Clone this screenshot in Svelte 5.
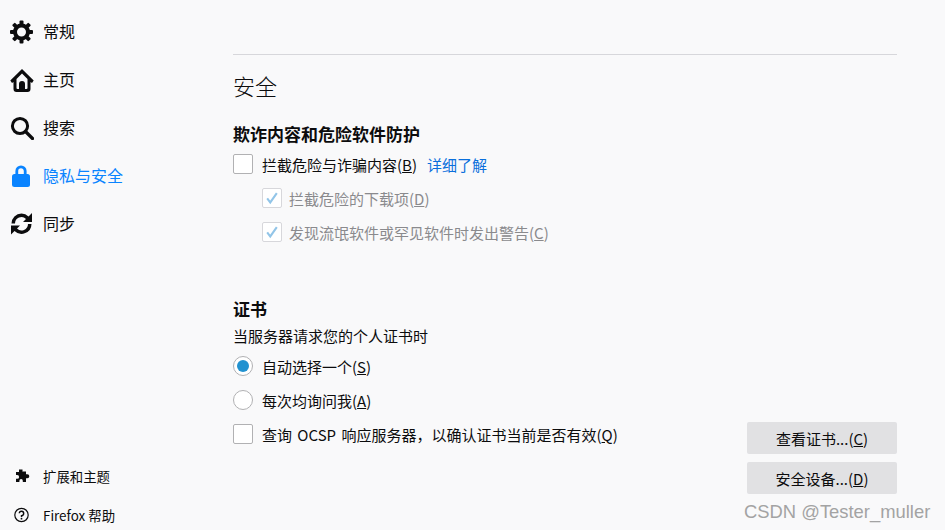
<script>
  const navItems = [
    { id: 'general', label: '常规' },
    { id: 'home', label: '主页' },
    { id: 'search', label: '搜索' },
    { id: 'privacy', label: '隐私与安全', active: true },
    { id: 'sync', label: '同步' }
  ];
  const teeth = [0, 45, 90, 135, 180, 225, 270, 315];
</script>

{#snippet navIcon(id)}
  <svg class="nav-icon" viewBox="0 0 24 24" fill="currentColor">
    {#if id === 'general'}
      <g transform="translate(-.5 0)">
        <circle cx="12" cy="12" r="6.500" fill="none" stroke="currentColor" stroke-width="4" />
        {#each teeth as deg}
          <rect x="10" y="0.500" width="4" height="6" rx="1" transform="rotate({deg} 12 12)" />
        {/each}
      </g>
    {:else if id === 'home'}
      <path fill-rule="evenodd" d="M12 1 .3 12.500 2 15l1.500-1v7a3 3 0 0 0 3 3h11a3 3 0 0 0 3-3v-7L22 15l1.700-2.500L12 1zM12 5.500l5.500 5.500v9a1 1 0 0 1-1 1h-9a1 1 0 0 1-1-1v-9L12 5.500z" />
      <path d="M9 22v-6a3 3 0 0 1 6 0v6H9z" />
    {:else if id === 'search'}
      <circle cx="10" cy="10" r="7.600" fill="none" stroke="currentColor" stroke-width="3" />
      <path d="M15.500 15.500 22.500 22.500" stroke="currentColor" stroke-width="3.200" stroke-linecap="round" />
    {:else if id === 'privacy'}
      <rect x="2" y="10" width="18" height="13" rx="2.500" />
      <path d="M6.800 11V7a4.200 4.200 0 0 1 8.400 0v4" fill="none" stroke="currentColor" stroke-width="2.800" />
    {:else}
      <path d="M11.500 1.500A10 10 0 0 0 1.500 11.500H5a6.500 6.500 0 0 1 11-4.600L13 10h9V1l-3.500 3.500a10 10 0 0 0-7-3z" />
      <path d="M18 12a6.500 6.500 0 0 1-11 4.600L10 13.500H1v9L4.500 19a10 10 0 0 0 17-7H18z" />
    {/if}
  </svg>
{/snippet}

{#snippet check()}
  <svg class="tick" viewBox="0 0 16 16" fill="none" stroke="#92c5e8" stroke-width="2.400">
    <path d="M2.500 8.500 6 13 13.500 2.500" />
  </svg>
{/snippet}

<div class="page">
  <nav class="sidebar">
    <ul class="nav-list">
      {#each navItems as item (item.id)}
        <li class="nav-item" class:active={item.active}>
          {@render navIcon(item.id)}
          <span>{item.label}</span>
        </li>
      {/each}
    </ul>
    <ul class="foot-list">
      <li class="foot-item">
        <svg class="foot-icon" viewBox="0 0 16 16" fill="currentColor">
          <path d="M5 1.500h3.500v2.200a1.500 1.500 0 0 1 .5-.2h1a1.800 1.800 0 0 1 0 0H12v2.800h1.300a2 2 0 0 1 0 4H12V14H8.800v-1.200a1.700 1.700 0 0 0-3.400 0V14H2v-3.200h1.200a1.900 1.900 0 0 0 0-3.800H2V4h3V1.500z" />
        </svg>
        <span>扩展和主题</span>
      </li>
      <li class="foot-item">
        <svg class="foot-icon" viewBox="0 0 16 16">
          <circle cx="7.500" cy="8" r="6.700" fill="none" stroke="currentColor" stroke-width="1.200" />
          <path d="M5.300 6.300A2.200 2.200 0 1 1 7.500 8.700v1.200" fill="none" stroke="currentColor" stroke-width="1.400" />
          <circle cx="7.500" cy="11.700" r="0.900" fill="currentColor" />
        </svg>
        <span>Firefox 帮助</span>
      </li>
    </ul>
  </nav>

  <main class="content">
    <hr class="rule" />
    <h1 class="title">安全</h1>

    <h2 class="heading">欺诈内容和危险软件防护</h2>
    <div class="row first">
      <span class="box"></span>
      <span class="label">拦截危险与诈骗内容(<u>B</u>)</span>
      <span class="link">详细了解</span>
    </div>
    <div class="row sub">
      <span class="box small">{@render check()}</span>
      <span class="label">拦截危险的下载项(<u>D</u>)</span>
    </div>
    <div class="row sub">
      <span class="box small">{@render check()}</span>
      <span class="label">发现流氓软件或罕见软件时发出警告(<u>C</u>)</span>
    </div>

    <h2 class="heading cert">证书</h2>
    <p class="desc">当服务器请求您的个人证书时</p>
    <div class="row">
      <span class="radio selected"></span>
      <span class="label">自动选择一个(<u>S</u>)</span>
    </div>
    <div class="row">
      <span class="radio"></span>
      <span class="label">每次均询问我(<u>A</u>)</span>
    </div>
    <div class="last">
      <div class="row ocsp">
        <span class="box"></span>
        <span class="label">查询 OCSP 响应服务器，以确认证书当前是否有效(<u>Q</u>)</span>
      </div>
      <div class="buttons">
        <button class="btn">查看证书...(<u>C</u>)</button>
        <button class="btn">安全设备...(<u>D</u>)</button>
      </div>
    </div>
  </main>

  <div class="watermark">CSDN @Tester_muller</div>
</div>

<style>
  :global(body) {
    margin: 0;
    background: #f9f9fa;
  }

  .page {
    position: relative;
    display: flex;
    height: 530px;
    overflow: hidden;
    background: #f9f9fa;
    color: #0c0c0d;
    font-family: "Noto Sans CJK SC", "Noto Sans", sans-serif;
    font-size: 15px;
  }

  ul {
    list-style: none;
    margin: 0;
    padding: 0;
  }

  .sidebar {
    display: flex;
    flex-direction: column;
    justify-content: space-between;
    width: 233px;
    flex-shrink: 0;
    padding: 8px 0 0;
    box-sizing: border-box;
  }

  .nav-item {
    display: flex;
    align-items: center;
    height: 48px;
    padding-left: 10px;
    gap: 9px;
    font-size: 16px;
    line-height: 22px;
  }

  .nav-item span {
    margin-top: -2px;
  }

  .nav-item.active {
    color: #0a84ff;
  }

  .nav-icon {
    width: 24px;
    height: 24px;
    flex-shrink: 0;
  }

  .foot-list {
    margin-bottom: -4px;
  }

  .foot-item {
    display: flex;
    align-items: center;
    height: 39px;
    padding-left: 14px;
    gap: 13px;
    font-size: 13.400px;
  }

  .foot-icon {
    width: 16px;
    height: 16px;
    flex-shrink: 0;
  }

  .content {
    width: 664px;
    padding-top: 54px;
    box-sizing: border-box;
  }

  .rule {
    margin: 0;
    border: none;
    border-top: 1px solid #d7d7db;
  }

  .title {
    margin: 14px 0 0;
    height: 32px;
    line-height: 32px;
    font-size: 22px;
    font-weight: 300;
  }

  .heading {
    margin: 21px 0 0;
    height: 24px;
    line-height: 24px;
    font-size: 17px;
    font-weight: 700;
  }

  .heading.cert {
    margin-top: 48px;
  }

  .desc {
    margin: 4px 0 2px;
    height: 22px;
    line-height: 22px;
  }

  .row {
    display: flex;
    align-items: center;
    height: 34px;
    gap: 9px;
  }

  .row.first {
    height: 35px;
    padding-top: 1px;
    box-sizing: border-box;
  }

  .row.sub {
    padding-left: 29px;
    gap: 7px;
    color: #8a8a8d;
  }

  .box {
    display: flex;
    align-items: center;
    justify-content: center;
    width: 20px;
    height: 20px;
    box-sizing: border-box;
    border: 1px solid #b1b1b3;
    border-radius: 2px;
    background: #fff;
    flex-shrink: 0;
  }

  .box.small {
    border-color: #d7d7db;
  }

  .tick {
    width: 14px;
    height: 14px;
  }

  .radio {
    position: relative;
    width: 20px;
    height: 20px;
    box-sizing: border-box;
    border: 1px solid #b1b1b3;
    border-radius: 50%;
    background: #fff;
    flex-shrink: 0;
  }

  .radio.selected::after {
    content: "";
    position: absolute;
    inset: 3px;
    border-radius: 50%;
    background: #2292d0;
  }

  .link {
    margin-left: 1px;
    color: #0a6fdc;
  }

  .last {
    display: flex;
    justify-content: space-between;
    align-items: flex-start;
  }

  .ocsp {
    height: 34px;
  }

  .ocsp .label {
    word-spacing: 2px;
  }

  .buttons {
    display: flex;
    flex-direction: column;
    gap: 8px;
    margin-top: 5px;
  }

  .btn {
    width: 150px;
    height: 32px;
    padding: 0;
    border: none;
    border-radius: 2px;
    background: #e1e1e3;
    color: #0c0c0d;
    font: inherit;
  }

  .watermark {
    position: absolute;
    left: 744px;
    top: 501px;
    color: #a3a3a3;
    font-family: "Liberation Sans", sans-serif;
    font-size: 18.400px;
    line-height: 22px;
    white-space: nowrap;
  }
</style>
